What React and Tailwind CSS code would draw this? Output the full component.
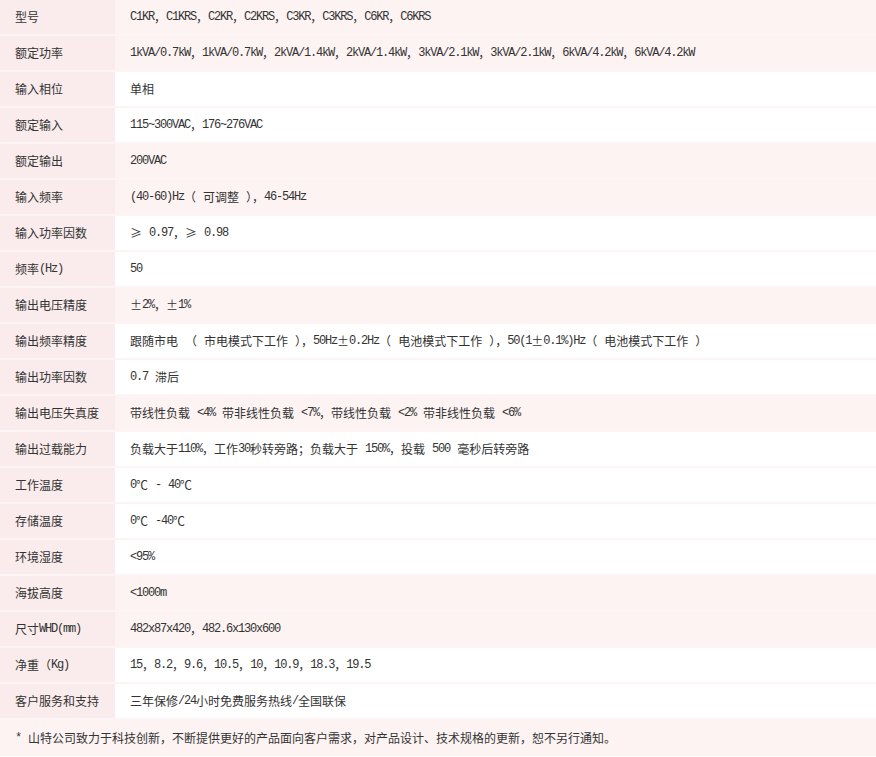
const ROWS = [
  ['型号', 'C1KR，C1KRS，C2KR，C2KRS，C3KR，C3KRS，C6KR，C6KRS', true],
  ['额定功率', '1kVA/0.7kW，1kVA/0.7kW，2kVA/1.4kW，2kVA/1.4kW，3kVA/2.1kW，3kVA/2.1kW，6kVA/4.2kW，6kVA/4.2kW', true],
  ['输入相位', '单相', false],
  ['额定输入', '115~300VAC，176~276VAC', false],
  ['额定输出', '200VAC', true],
  ['输入频率', '(40-60)Hz（ 可调整 ），46-54Hz', true],
  ['输入功率因数', '≥ 0.97，≥ 0.98', false],
  ['频率(Hz)', '50', false],
  ['输出电压精度', '±2%，±1%', true],
  ['输出频率精度', '跟随市电 （ 市电模式下工作 ），50Hz±0.2Hz（ 电池模式下工作 ），50(1±0.1%)Hz（ 电池模式下工作 ）', false],
  ['输出功率因数', '0.7 滞后', false],
  ['输出电压失真度', '带线性负载 <4% 带非线性负载 <7%，带线性负载 <2% 带非线性负载 <6%', true],
  ['输出过载能力', '负载大于110%，工作30秒转旁路；负载大于 150%，投载 500 毫秒后转旁路', false],
  ['工作温度', '0℃ - 40℃', false],
  ['存储温度', '0℃ -40℃', false],
  ['环境湿度', '<95%', false],
  ['海拔高度', '<1000m', true],
  ['尺寸WHD(mm)', '482x87x420，482.6x130x600', true],
  ['净重（Kg)', '15，8.2，9.6，10.5，10，10.9，18.3，19.5', false],
  ['客户服务和支持', '三年保修/24小时免费服务热线/全国联保', false],
]

// latin runs get the narrow half-width look of the original; spaces kept as fixed gaps
function Mixed({ text }) {
  return text.split(/([\x20-\x7e]+)/).map((part, i) =>
    /[\x20-\x7e]/.test(part) ? (
      <span key={i} className="font-['Liberation_Mono',monospace] tracking-[-1.2px]">
        {part.split(/( )/).map((p, j) =>
          p === ' ' ? <span key={j} className="inline-block w-[7px]" /> : p
        )}
      </span>
    ) : (
      part
    )
  )
}

export default function App() {
  return (
    <div className="w-[876px] h-[757px] bg-white text-[12px] leading-none text-[#333] font-['Noto_Sans_CJK_SC','Noto_Sans',sans-serif]">
      {ROWS.map(([label, value, pink]) => (
        <div key={label} className="flex h-[36px] border-b-2 border-[#fdf5f5]">
          <div className="w-[115px] shrink-0 flex items-center pl-[15px] bg-[#faecec]">
            <Mixed text={label} />
          </div>
          <div className={'flex-1 flex items-center pl-[15px] ' + (pink ? 'bg-[#fdf3f3]' : 'bg-white')}>
            <Mixed text={value} />
          </div>
        </div>
      ))}
      <div className="h-[36px] flex items-center pl-[15px] bg-[#fdf3f3]">
        <Mixed text="* 山特公司致力于科技创新，不断提供更好的产品面向客户需求，对产品设计、技术规格的更新，恕不另行通知。" />
      </div>
    </div>
  )
}
